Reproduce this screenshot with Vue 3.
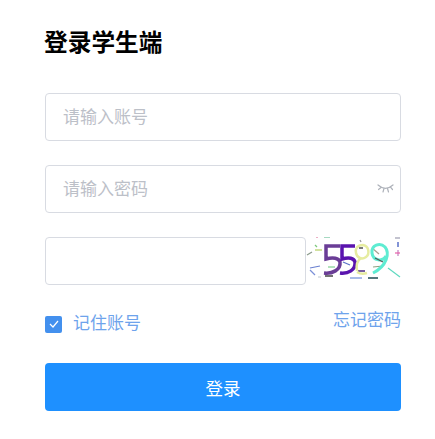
<template>
  <div class="login-box">
    <h1 class="title">登录学生端</h1>

    <div class="field">
      <input class="field-input" type="text" placeholder="请输入账号" />
    </div>

    <div class="field">
      <input class="field-input" type="password" placeholder="请输入密码" />
      <svg class="eye" width="17" height="9" viewBox="0 0 17 9" fill="none" stroke="#aeb2ba" stroke-width="1.200" stroke-linecap="round">
        <path d="M1 1c3 2.600 5 3.400 7.500 3.400S13 3.600 16 1" />
        <path d="M4 3.500L1.500 5.500" />
        <path d="M7 4.500L6 8" />
        <path d="M10.500 4.500L11.500 8" />
        <path d="M13.500 3.200L15.500 5.500" />
      </svg>
    </div>

    <div class="captcha-row">
      <input class="field-input captcha-input" type="text" />
      <svg class="captcha" width="96" height="48" viewBox="0 0 96 48" fill="none">
        <g stroke-width="1.200">
          <path d="M11 0h2" stroke="#d8608c" />
          <path d="M19 0h6" stroke="#6cc09a" />
          <path d="M10 8l2 2" stroke="#7cc87c" />
          <path d="M10 13h7" stroke="#b5cf60" />
          <path d="M2 18l5-3" stroke="#8a9a8a" />
          <path d="M5 31l10-2" stroke="#6a80d0" />
          <path d="M5 33l5 5" stroke="#7c90d8" />
          <path d="M23 30h7" stroke="#7fd090" />
          <path d="M13 40h3" stroke="#c8d0d8" />
          <path d="M55 3l1 2" stroke="#999" />
          <path d="M45 41h12" stroke="#7090d8" />
          <path d="M90 1h5" stroke="#9c9cb0" />
          <path d="M93 13v6" stroke="#c080c0" />
          <path d="M90 16h5" stroke="#e860a8" />
          <path d="M83 31l12 9" stroke="#5fd9c0" />
          <path d="M67 11l7 6" stroke="#a8a090" />
          <path d="M68 30l10-1" stroke="#90a080" />
        </g>
        <path d="M93 5v5" stroke="#5a70c8" stroke-width="1.500" />
        <path d="M20 39h8" stroke="#444" stroke-width="1.500" />
        <path d="M53 34h7" stroke="#4a2a80" stroke-width="1.500" />
        <path d="M63 41h10" stroke="#1d4a50" stroke-width="1.500" />
        <path d="M54 11h4" stroke="#222" stroke-width="1.200" />
        <path d="M35 9H21v13c7-2 13-1 14 3 1 8-8 12-16 11" stroke="#6a3d96" stroke-width="3.500" />
        <path d="M50 9H37v13c7-2 12-1 13 3 1 8-7 12-15 11" stroke="#5a14ae" stroke-width="3.500" />
        <path d="M38 25l7 3" stroke="#5a70c8" stroke-width="1.200" />
        <path d="M58 8c-6 0-8 4-7 8 1 5 6 7 10 4 4-3 3-11-3-12zM62 36c-3 1-7 1-10-1M56 21c-3 2-5 7-4 13" stroke="#e6eca0" stroke-width="2.500" />
        <path d="M81 19c-3 6-13 5-14-3-1-8 8-11 13-6 5 6 2 19-12 26" stroke="#5eecd2" stroke-width="3" />
        <path d="M70 21l8 4" stroke="#555" stroke-width="1.200" />
      </svg>
    </div>

    <div class="options">
      <label class="remember">
        <span class="check">
          <svg width="10" height="8" viewBox="0 0 10 8" fill="none" stroke="#fff" stroke-width="1.200">
            <path d="M1 4l3 3 5-6" />
          </svg>
        </span>
        记住账号
      </label>
      <a class="forgot">忘记密码</a>
    </div>

    <button class="submit">登录</button>
  </div>
</template>

<script setup>
</script>

<style>
html,
body {
  background: #fff;
}
</style>

<style scoped>
.login-box {
  width: 356px;
  padding: 28px 0 0 45px;
  font-family: "Liberation Sans", "Noto Sans CJK SC", sans-serif;
}
.title {
  margin: 0 0 35px -1px;
  height: 30px;
  line-height: 30px;
  font-size: 23.7px;
  font-weight: 700;
  color: #000;
}
.field {
  position: relative;
  margin-bottom: 24px;
  height: 48px;
}
.field-input {
  box-sizing: border-box;
  width: 100%;
  height: 48px;
  padding: 1px 18px 0 17px;
  border: 1px solid #d8dbe2;
  border-radius: 4px;
  outline: none;
  font-family: inherit;
  font-size: 17px;
  background: #fff;
}
.field-input::placeholder {
  color: #bcc0c8;
}
.eye {
  position: absolute;
  top: 19px;
  right: 7px;
}
.captcha-row {
  display: flex;
  height: 48px;
  margin-bottom: 26px;
}
.captcha-input {
  flex: 1;
  min-width: 0;
  margin-right: -1px;
}
.captcha {
  flex: none;
}
.options {
  display: flex;
  align-items: flex-start;
  justify-content: space-between;
  height: 31px;
  margin-bottom: 21px;
  color: #6ea3ec;
  font-size: 17px;
}
.remember {
  display: flex;
  align-items: center;
  gap: 11px;
  margin-top: 2px;
  line-height: 22px;
}
.check {
  display: flex;
  align-items: center;
  justify-content: center;
  width: 17px;
  height: 17px;
  border-radius: 2px;
  background: #4390ee;
}
.forgot {
  line-height: 20px;
}
.submit {
  display: block;
  width: 100%;
  height: 48px;
  border: none;
  border-radius: 4px;
  background: #1e90ff;
  color: #fff;
  font-family: inherit;
  font-size: 17.5px;
}
</style>
